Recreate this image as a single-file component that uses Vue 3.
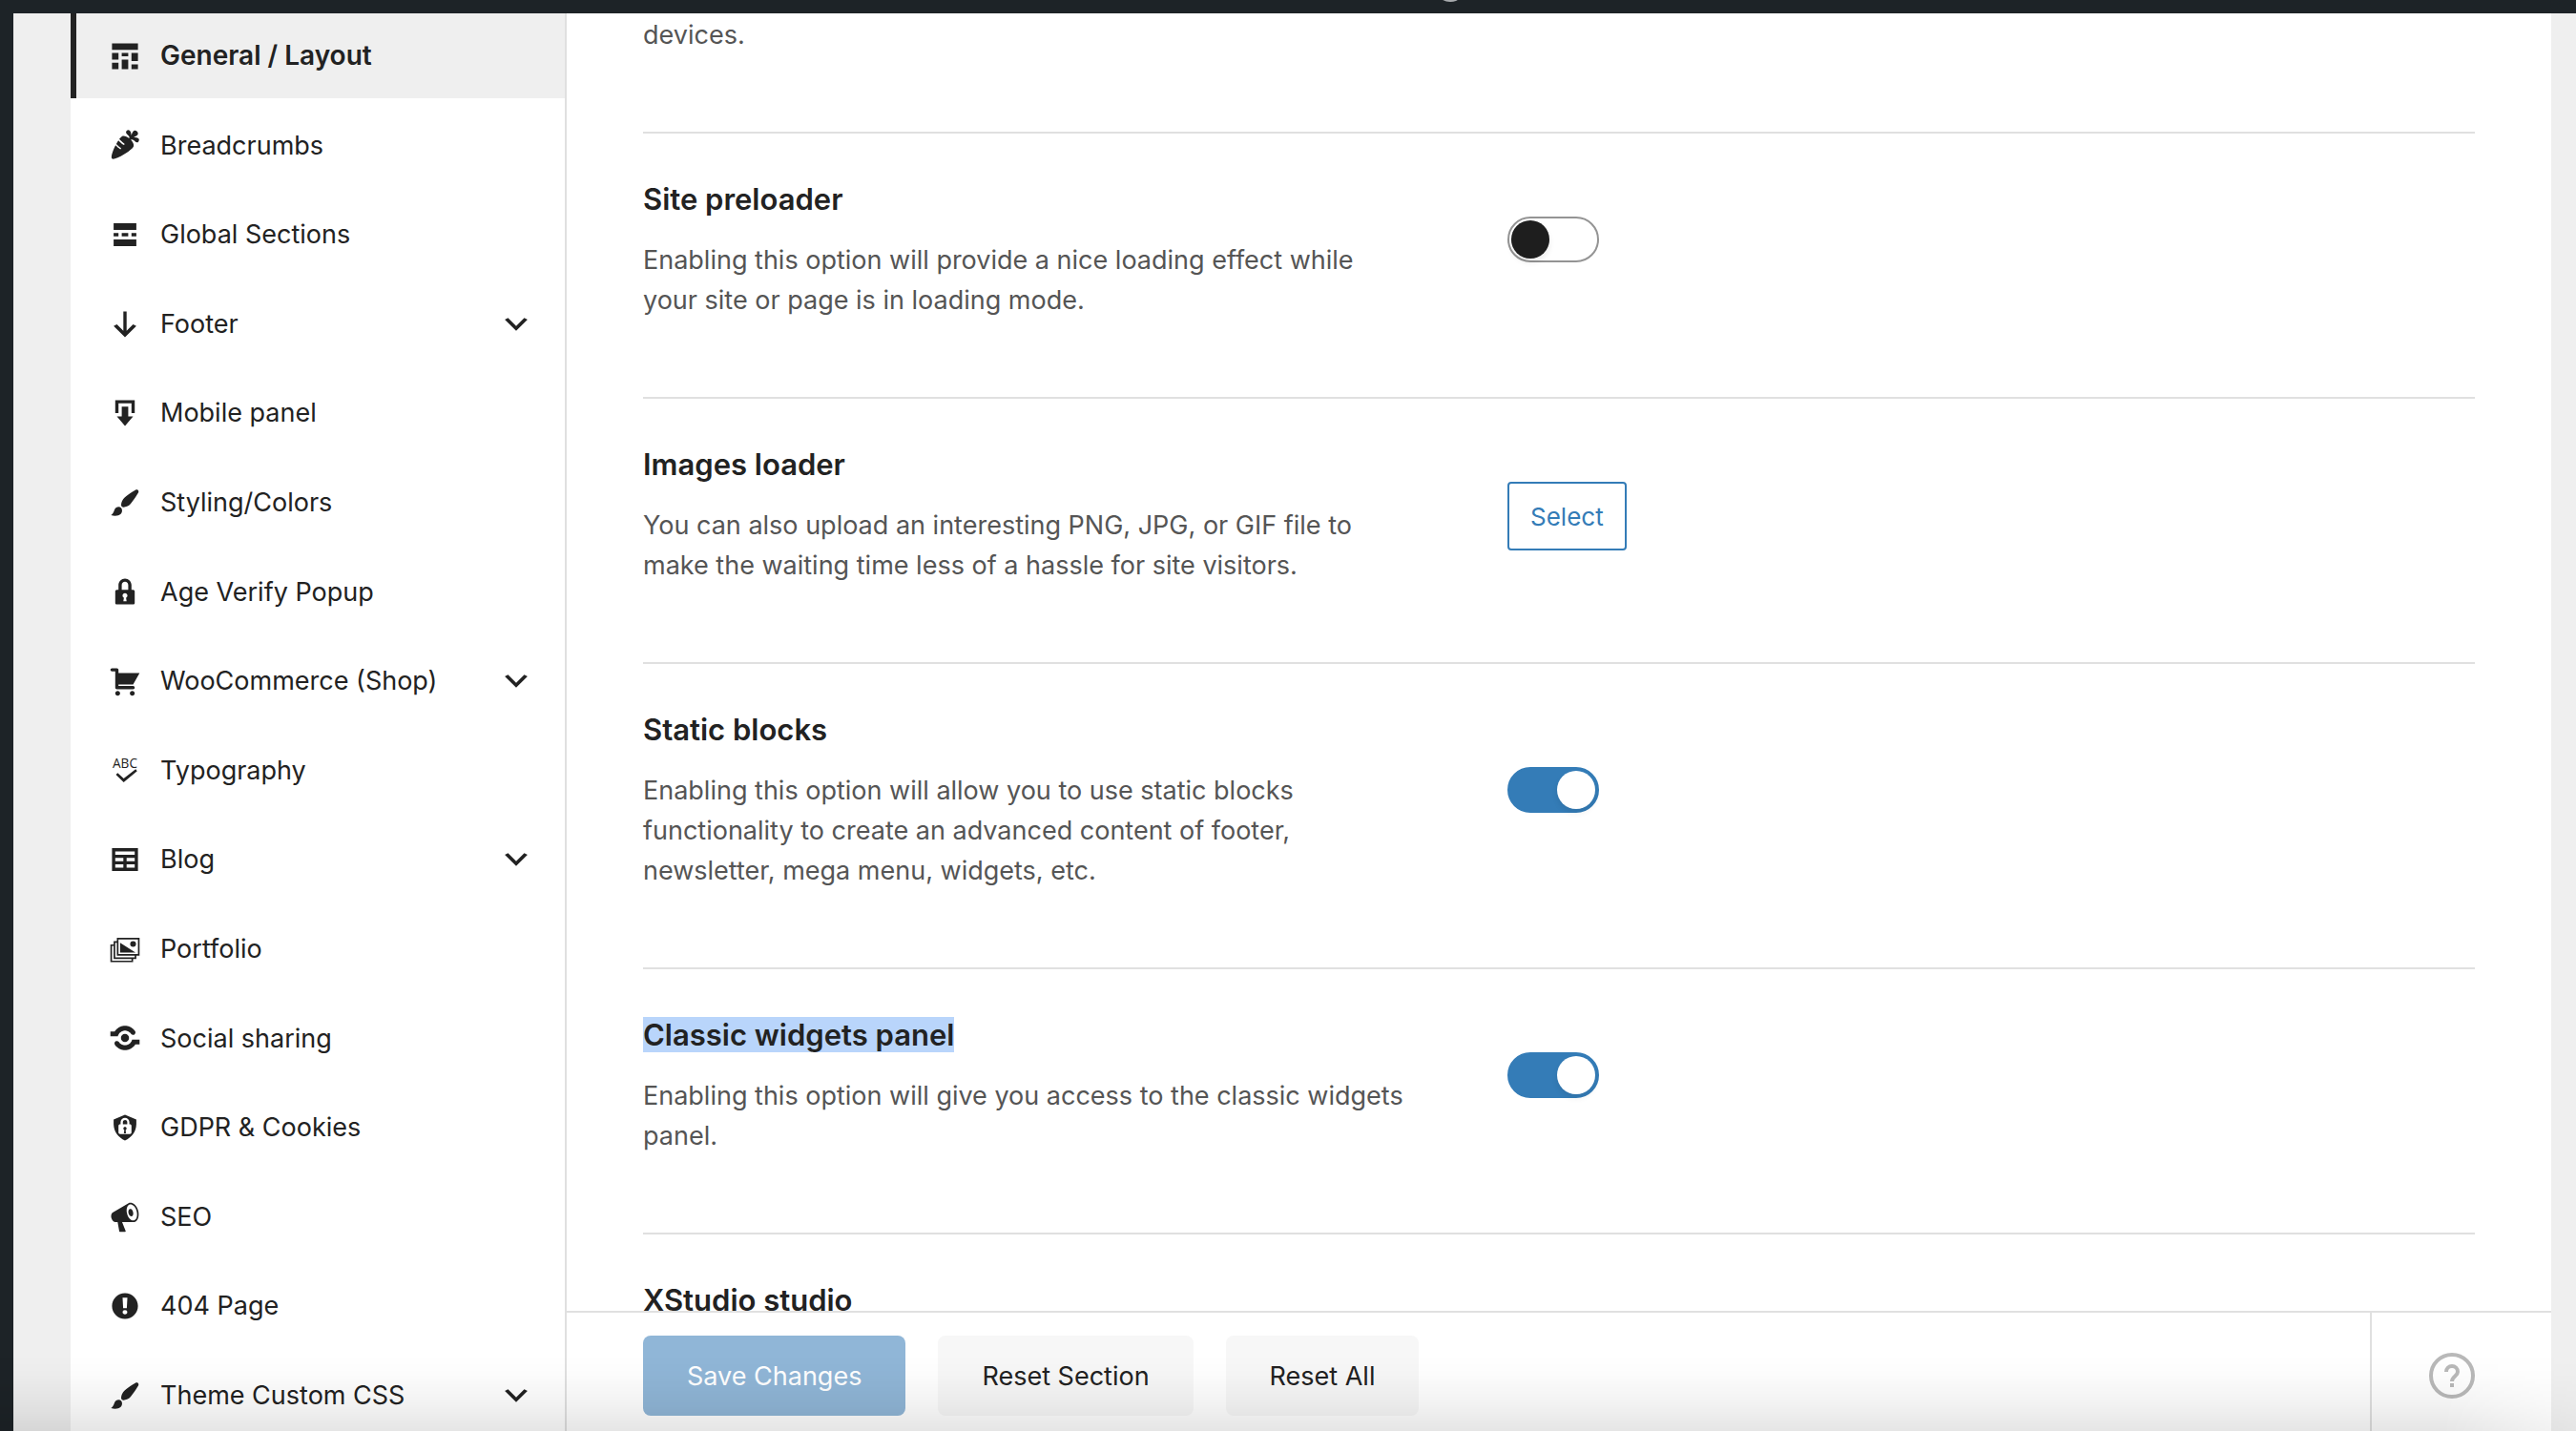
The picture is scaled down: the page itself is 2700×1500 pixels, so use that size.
<script setup>
import { ref } from 'vue'

const menu = [
  { label: 'General / Layout', icon: 'schedule', active: true },
  { label: 'Breadcrumbs', icon: 'carrot' },
  { label: 'Global Sections', icon: 'sections' },
  { label: 'Footer', icon: 'down', children: true },
  { label: 'Mobile panel', icon: 'download' },
  { label: 'Styling/Colors', icon: 'brush' },
  { label: 'Age Verify Popup', icon: 'lock' },
  { label: 'WooCommerce (Shop)', icon: 'cart', children: true },
  { label: 'Typography', icon: 'spellcheck' },
  { label: 'Blog', icon: 'table', children: true },
  { label: 'Portfolio', icon: 'images' },
  { label: 'Social sharing', icon: 'share' },
  { label: 'GDPR & Cookies', icon: 'privacy' },
  { label: 'SEO', icon: 'megaphone' },
  { label: '404 Page', icon: 'warning' },
  { label: 'Theme Custom CSS', icon: 'brush', children: true }
]

const icons = {
  schedule: 'M2 2h16v4H2V2zm0 10V8h4v4H2zm6-2V8h4v2H8zm6 3V8h4v5h-4zm-6 5v-6h4v6H8zm-6 0v-4h4v4H2zm12 0v-3h4v3h-4z',
  carrot: 'M2 18.43c1.51 1.36 11.64-4.67 13.14-7.21.72-1.22-.13-3.01-1.52-4.44C15.2 5.73 16.59 9 17.91 8.31c.6-.32.99-1.31.7-1.92-.52-1.08-2.25-1.08-3.42-1.21.83-.2 2.82-1.05 2.86-2.25.04-.92-1.13-1.97-2.05-1.86-1.21.14-1.65 1.88-2.06 3-.05-.71-.2-2.27-.98-2.95-1.04-.91-2.29-.05-2.32 1.05-.04 1.33 2.82 2.07 1.92 3.67C11.04 4.67 9.25 4.03 8.1 4.7c-.49.31-1.05.91-1.63 1.69.89.94 2.12 2.07 3.09 2.72.2.14.26.42.11.62-.14.21-.42.26-.62.12-.99-.67-2.2-1.78-3.1-2.71-.45.67-.91 1.43-1.34 2.23.85.86 1.93 1.83 2.79 2.41.2.14.25.42.11.62-.14.21-.42.26-.63.12-.85-.58-1.86-1.48-2.71-2.32C2.4 13.69 1.1 17.63 2 18.43z',
  sections: 'M17 7V3H3v4h14zM6 11V9H3v2h3zm6 0V9H8v2h4zm5 0V9h-3v2h3zm0 6v-4H3v4h14z',
  down: 'M9 2h2v12l4-4 2 1-7 7-7-7 2-1 4 4V2z',
  download: 'M14.01 4v6h2V2H4v8h2.01V4h8zm-2 2v6h3l-5 6-5-6h3V6h4z',
  brush: 'M18.33 3.57s.27-.8-.31-1.36c-.53-.52-1.22-.24-1.22-.24-.61.3-5.76 3.47-7.67 5.57-.86.96-2.06 3.79-1.09 4.82.92.98 3.96-.17 4.79-1 2.06-2.06 5.21-7.17 5.5-7.79zM1.4 17.65c2.37-1.56 1.46-3.41 3.23-4.64.93-.65 2.22-.62 3.08.29.63.67.8 2.57-.16 3.46-1.57 1.45-4 1.55-6.15.89z',
  lock: 'M14 9h1c.55 0 1 .45 1 1v7c0 .55-.45 1-1 1H5c-.55 0-1-.45-1-1v-7c0-.55.45-1 1-1h1V6c0-2.21 1.79-4 4-4s4 1.79 4 4v3zm-2 0V6c0-1.1-.9-2-2-2s-2 .9-2 2v3h4zm-1 7l-.36-2.15c.51-.24.86-.75.86-1.35 0-.83-.67-1.5-1.5-1.5s-1.5.67-1.5 1.5c0 .6.35 1.11.86 1.35L9 16h2z',
  cart: 'M6 13h9c.55 0 1 .45 1 1s-.45 1-1 1H5c-.55 0-1-.45-1-1V4H2c-.55 0-1-.45-1-1s.45-1 1-1h3c.55 0 1 .45 1 1v2h13l-4 7H6v1zm-.5 3c.83 0 1.5.67 1.5 1.5S6.33 19 5.5 19 4 18.33 4 17.5 4.67 16 5.5 16zm9 0c.83 0 1.5.67 1.5 1.5s-.67 1.5-1.5 1.5-1.5-.67-1.5-1.5.67-1.5 1.5-1.5z',
  spellcheck: 'M5.5 11.3l3.7 3.4 7.4-5.7.9 1.1-8.3 7-4.8-4.8z',
  table: 'M18 17V3H2v14h16zM16 7H4V5h12v2zm-7 4H4V9h5v2zm7 0h-5V9h5v2zm-7 4H4v-2h5v2zm7 0h-5v-2h5v2z',
  images: 'M5 3h14v11h-2v2h-2v2H1V7h2V5h2V3zM6 4v9h12V4H6zM4 6v9h12v-1H5V6H4zM2 8v9h12v-1H3V8H2zM7 6l9.5 6H7V6zM15 5a1.8 1.8 0 1 1 0 3.6a1.8 1.8 0 1 1 0-3.6z',
  share: 'M16.22 5.8c.47.69.29 1.62-.4 2.08-.69.47-1.62.29-2.08-.4-.16-.24-.35-.46-.55-.67-.21-.2-.43-.39-.67-.55s-.5-.3-.77-.41c-.27-.12-.55-.21-.84-.26-.59-.13-1.23-.13-1.82-.01-.29.06-.57.15-.84.27-.27.11-.53.25-.77.41s-.46.35-.66.55c-.21.21-.4.43-.56.67s-.3.5-.41.76c-.01.02-.01.03-.01.04-.1.24-.17.48-.23.72H1V6h2.66c.04-.07.07-.13.12-.2.27-.4.57-.77.91-1.11s.72-.65 1.11-.91c.4-.27.83-.51 1.28-.7s.93-.34 1.41-.43c.99-.21 2.03-.21 3.02 0 .48.09.96.24 1.41.43s.88.43 1.28.7c.39.26.77.57 1.11.91s.64.71.91 1.11zM12.5 10c0-1.38-1.12-2.5-2.5-2.5S7.5 8.62 7.5 10s1.12 2.5 2.5 2.5 2.5-1.12 2.5-2.5zm-8.72 4.2c-.47-.69-.29-1.62.4-2.09.69-.46 1.62-.28 2.08.41.16.24.35.46.55.67.21.2.43.39.67.55s.5.3.77.41c.27.12.55.2.84.26.59.13 1.23.12 1.82 0 .29-.06.57-.14.84-.26.27-.11.53-.25.77-.41s.46-.35.66-.55c.21-.21.4-.44.56-.67.16-.25.3-.5.41-.76.01-.02.01-.03.01-.04.1-.24.17-.48.23-.72H19v3h-2.66c-.04.06-.07.13-.12.2-.27.4-.57.77-.91 1.11s-.72.65-1.11.91c-.4.27-.83.51-1.28.7s-.93.33-1.41.43c-.99.21-2.03.21-3.02 0-.48-.1-.96-.24-1.41-.43s-.88-.43-1.28-.7c-.39-.26-.77-.57-1.11-.91s-.64-.71-.91-1.11z',
  privacy: 'M10 9.6c-.6 0-1 .4-1 1 0 .4.3.7.6.8l-.3 2.1h1.3l-.2-2.1c.3-.1.6-.4.6-.8 0-.6-.4-1-1-1zm.1-4.3c-.7 0-1.4.5-1.4 1.2V8h2.7V6.5c-.1-.7-.6-1.2-1.3-1.2zM10 2L3 5v3c.1 4.4 2.9 8.3 7 9.9 4.1-1.6 6.9-5.5 7-9.9V5l-7-3zm4 11c0 .6-.4 1-1 1H7c-.6 0-1-.4-1-1V9c0-.6.4-1 1-1h.3V6.5C7.4 5.1 8.6 4 10 4c1.4 0 2.6 1.1 2.7 2.5V8h.3c.6 0 1 .4 1 1v4z',
  megaphone: 'M18.15 5.94c.46 1.62.38 3.22-.02 4.48-.42 1.28-1.26 2.18-2.3 2.48-.16.06-.26.06-.4.06-.06.02-.12.02-.18.02-.06.02-.14.02-.22.02h-6.8l2.22 5.5c.02.14-.06.26-.14.34-.08.1-.24.16-.34.16H6.95c-.1 0-.26-.06-.34-.16-.08-.08-.16-.2-.14-.34l-1-5.5H4.25l-.02-.02c-.5.06-1.08-.18-1.54-.62s-.88-1.08-1.06-1.88c-.24-.8-.2-1.56-.02-2.2.18-.62.58-1.08 1.06-1.3l.02-.02 9-5.4c.1-.06.18-.1.24-.16.06-.04.14-.08.24-.12.16-.08.28-.12.5-.18 1.04-.3 2.24.1 3.22.98s1.84 2.24 2.26 3.86zm-2.58 5.98h-.02c.4-.1.74-.34 1.04-.7.58-.7.86-1.76.86-3.04 0-.64-.1-1.3-.28-1.98-.34-1.36-1.02-2.5-1.78-3.24s-1.68-1.1-2.46-.88c-.82.22-1.4.96-1.7 2-.32 1.04-.28 2.36.06 3.72.38 1.36 1 2.5 1.8 3.24.78.74 1.62 1.1 2.48.88zm-2.54-7.08c.22-.04.42-.02.62.04.38.16.76.48 1.02 1s.42 1.2.42 1.78c0 .3-.04.56-.12.8-.18.48-.44.84-.86.94-.34.1-.8-.06-1.14-.4s-.64-.86-.78-1.5c-.18-.62-.12-1.24.02-1.72s.48-.84.82-.94z',
  warning: 'M10 2c4.42 0 8 3.58 8 8s-3.58 8-8 8-8-3.58-8-8 3.58-8 8-8zm1.13 9.38l.35-6.46H8.52l.35 6.46h2.26zm-.09 3.36c.24-.23.37-.55.37-.96 0-.42-.12-.74-.36-.97s-.59-.35-1.06-.35-.82.12-1.07.35-.37.55-.37.97c0 .41.13.73.38.96.26.23.61.34 1.06.34s.8-.11 1.05-.34z'
}

const options = ref([
  {
    id: 'site-preloader',
    title: 'Site preloader',
    text: 'Enabling this option will provide a nice loading effect while your site or page is in loading mode.',
    type: 'switch',
    value: false
  },
  {
    id: 'images-loader',
    title: 'Images loader',
    text: 'You can also upload an interesting PNG, JPG, or GIF file to make the waiting time less of a hassle for site visitors.',
    type: 'upload'
  },
  {
    id: 'static-blocks',
    title: 'Static blocks',
    text: 'Enabling this option will allow you to use static blocks functionality to create an advanced content of footer, newsletter, mega menu, widgets, etc.',
    type: 'switch',
    value: true
  },
  {
    id: 'classic-widgets',
    title: 'Classic widgets panel',
    text: 'Enabling this option will give you access to the classic widgets panel.',
    type: 'switch',
    value: true,
    marked: true
  },
  { id: 'xstudio', title: 'XStudio studio', type: 'none' }
])
</script>

<template>
  <div class="screen">
    <header class="adminbar"><span class="avatar"></span></header>
    <div class="workspace">
      <div class="admin-edge"></div>
      <nav class="sidebar">
        <ul class="menu">
          <li v-for="item in menu" :key="item.label">
            <a href="#" class="menu-link" :class="{ active: item.active }">
              <svg class="menu-icon" viewBox="0 0 20 20" aria-hidden="true">
                <text v-if="item.icon === 'spellcheck'" class="abc" x="10" y="8" text-anchor="middle">ABC</text>
                <path :d="icons[item.icon]" fill-rule="evenodd" />
              </svg>
              <span class="menu-label">{{ item.label }}</span>
              <svg v-if="item.children" class="chevron" viewBox="0 0 20 20" aria-hidden="true">
                <path d="M5 6l5 5 5-5 2 1-7 7-7-7z" />
              </svg>
            </a>
          </li>
        </ul>
      </nav>
      <main class="content">
        <div class="options">
          <section class="option tail">
            <p class="option-text">devices.</p>
          </section>
          <section v-for="opt in options" :key="opt.id" class="option">
            <div class="option-info">
              <h4 class="option-title">
                <label :for="opt.id"><mark v-if="opt.marked">{{ opt.title }}</mark><template v-else>{{ opt.title }}</template></label>
              </h4>
              <p v-if="opt.text" class="option-text">{{ opt.text }}</p>
            </div>
            <input v-if="opt.type === 'switch'" :id="opt.id" v-model="opt.value" class="switch" type="checkbox" role="switch">
            <button v-else-if="opt.type === 'upload'" :id="opt.id" class="select-btn" type="button">Select</button>
          </section>
        </div>
        <footer class="actions">
          <div class="buttons">
            <button class="btn save" type="button">Save Changes</button>
            <button class="btn" type="button">Reset Section</button>
            <button class="btn" type="button">Reset All</button>
          </div>
          <a href="#" class="help" aria-label="Help">
            <svg viewBox="0 0 48 48" aria-hidden="true">
              <circle cx="24" cy="24" r="22" />
              <path d="M18 20c0-3.5 2.7-6 6-6s6 2.500 6 6c0 4.500-6 4.500-6 10M24 32v4" />
            </svg>
          </a>
        </footer>
      </main>
    </div>
    <div class="bottom-shade"></div>
  </div>
</template>

<style>
body {
  margin: 0;
}
</style>

<style scoped>
.screen {
  position: relative;
  display: flex;
  flex-direction: column;
  height: 100vh;
  overflow: hidden;
  background: #efefef;
  color: #222;
  font-family: Inter, "Liberation Sans", sans-serif;
  font-size: 27px;
}

.adminbar {
  position: relative;
  z-index: 1;
  display: flex;
  flex: none;
  align-items: flex-end;
  justify-content: center;
  height: 14px;
  padding-left: 340px;
  overflow: hidden;
  background: #1d2327;
}

.avatar {
  width: 32px;
  height: 32px;
  margin-bottom: 12px;
  border-radius: 50%;
  background: #a7aaad;
}

.workspace {
  display: flex;
  flex: 1;
  min-height: 0;
  padding-right: 26px;
}

.admin-edge {
  flex: none;
  width: 14px;
  margin-right: 60px;
  background: #1d2327;
}

.sidebar {
  flex: none;
  width: 518px;
  border-right: 2px solid #e0e0e0;
  background: #fff;
}

.menu {
  margin: -5px 0 0;
  padding: 0;
  list-style: none;
}

.menu-link {
  display: flex;
  align-items: center;
  padding: 33px 34px 27px;
  border-left: 6px solid transparent;
  color: #222;
  font-size: 28px;
  line-height: 1.2em;
  text-decoration: none;
}

.menu-link.active {
  border-left-color: #222;
  background: #efefef;
  font-weight: 600;
}

.menu-icon {
  flex: none;
  width: 34px;
  height: 34px;
  margin: -2px 20px -2px 0;
  fill: #222;
}

.abc {
  font: 8px "Open Sans", sans-serif;
}

.menu-label {
  flex: 1;
  font-size: 27px;
}

.active .menu-label {
  font-size: 28px;
}

.chevron {
  width: 34px;
  height: 34px;
  margin: -2px 0;
  fill: #222;
}

.content {
  display: flex;
  flex: 1;
  flex-direction: column;
  min-width: 0;
  background: #fff;
}

.options {
  flex: 1;
  min-height: 0;
  padding: 0 80px;
  overflow: hidden;
}

.option {
  display: flex;
  align-items: center;
  padding: 50px 0 80px;
  border-bottom: 2px solid #e0e0e0;
}

.option.tail {
  padding-top: 2px;
}

.option-info {
  width: 804px;
  margin-right: 102px;
}

.option-title {
  margin: 0 0 24px;
  font-size: 31px;
  font-weight: 600;
  line-height: 38px;
}

.option-title mark {
  background: #b9d5fb;
  color: inherit;
}

.option-text {
  margin: 0;
  color: #555;
  line-height: 42px;
}

.switch {
  position: relative;
  width: 96px;
  height: 48px;
  margin: 0 0 24px;
  border: 2px solid #949494;
  border-radius: 24px;
  background: #fff;
  appearance: none;
}

.switch::before {
  position: absolute;
  top: 2px;
  left: 2px;
  width: 40px;
  height: 40px;
  border-radius: 50%;
  background: #1e1e1e;
  box-shadow: 0 4px 6px rgba(0, 0, 0, 0.08);
  content: "";
}

.switch:checked {
  border-color: #347cb7;
  background: #347cb7;
}

.switch:checked::before {
  right: 2px;
  left: auto;
  background: #fff;
}

.select-btn {
  height: 72px;
  padding: 0 22px;
  border: 2px solid #347cb7;
  border-radius: 4px;
  background: #fff;
  color: #347cb7;
  font: 26px Inter, "Liberation Sans", sans-serif;
}

.actions {
  display: flex;
  flex: none;
  border-top: 2px solid #e0e0e0;
}

.buttons {
  display: flex;
  flex: 1;
  gap: 34px;
  padding: 24px 80px 16px;
}

.btn {
  height: 84px;
  padding: 0 46px;
  border: 0;
  border-radius: 8px;
  background: #f7f7f7;
  color: #222;
  font: 27px Inter, "Liberation Sans", sans-serif;
}

.btn.save {
  background: #90b6d7;
  color: #fff;
}

.help {
  padding: 42px 80px 0 60px;
  border-left: 2px solid #e0e0e0;
}

.help svg {
  display: block;
  width: 48px;
  height: 48px;
  fill: none;
  stroke: #b9b9b9;
  stroke-width: 4;
}

.bottom-shade {
  position: absolute;
  right: 0;
  bottom: 0;
  left: 0;
  height: 80px;
  background: linear-gradient(to top, rgba(0, 0, 0, 0.1), rgba(0, 0, 0, 0.05) 35%, rgba(0, 0, 0, 0.01) 75%, transparent);
  mask-image: linear-gradient(to left, rgba(0, 0, 0, 0.4), #000 140px);
  pointer-events: none;
}
</style>
